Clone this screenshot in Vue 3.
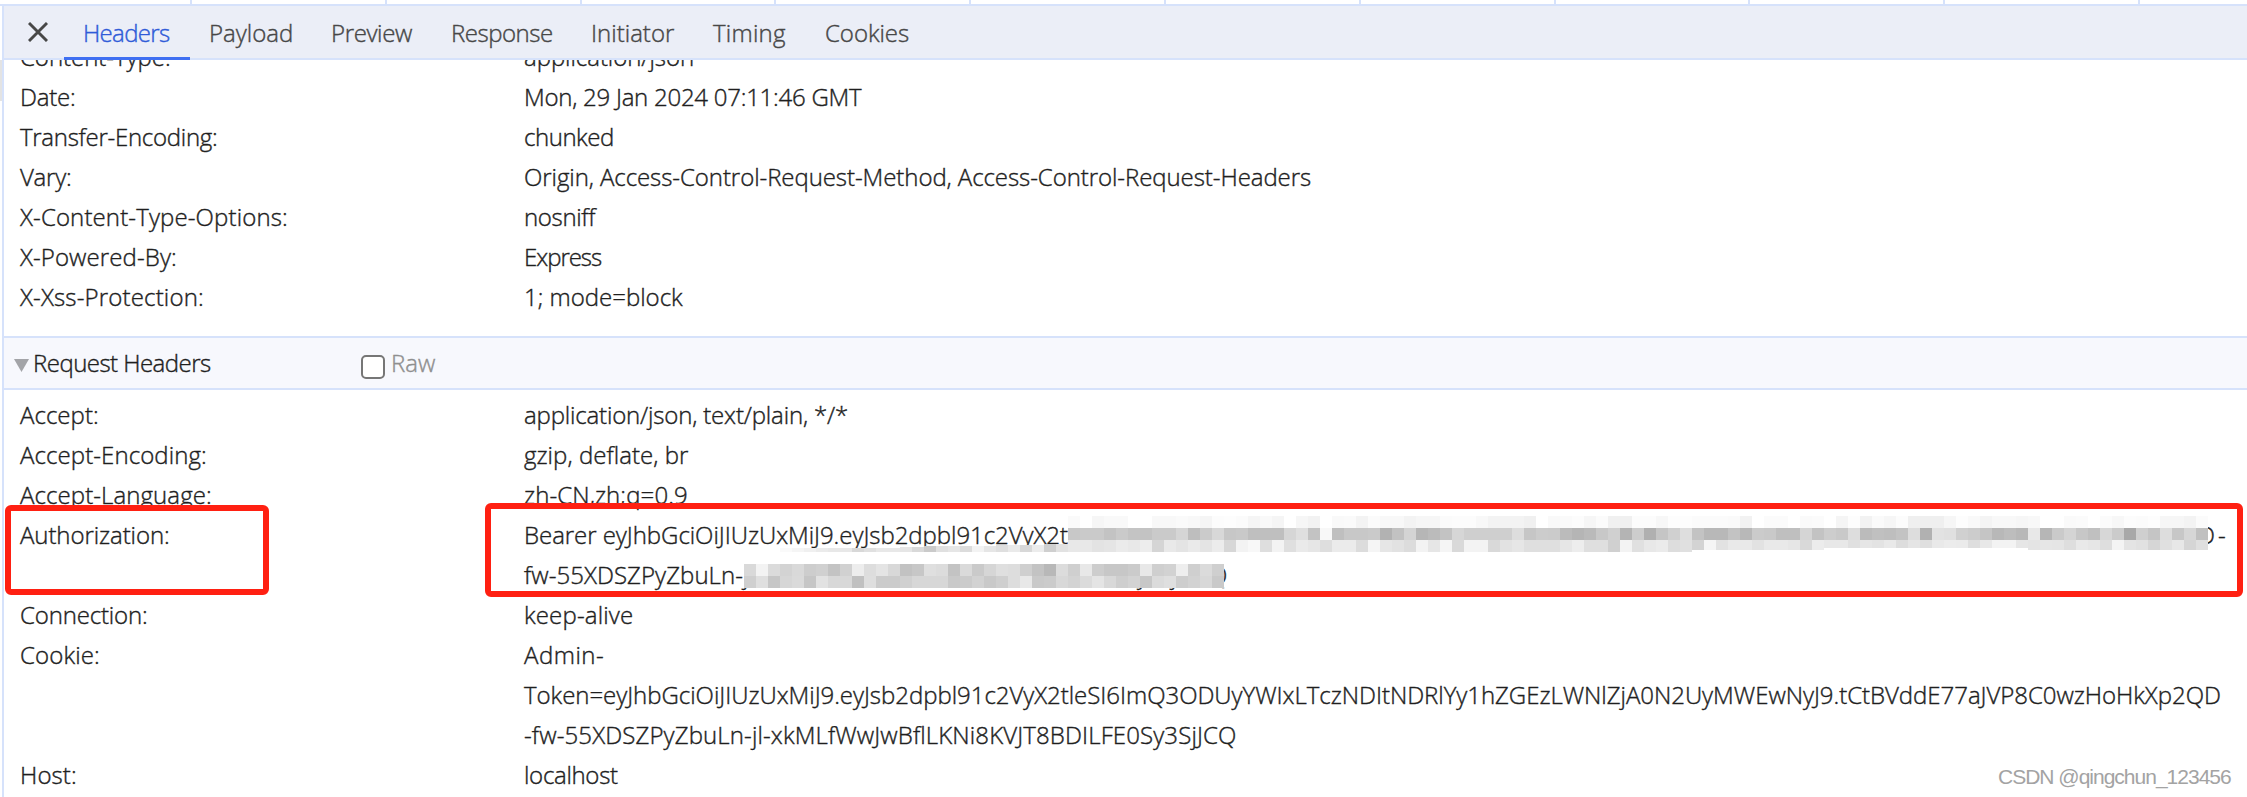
<script setup>
const FAMILY = '"Open Sans", "Noto Sans", sans-serif'
const WATERMARK_FAMILY = '"Liberation Sans", Arial, sans-serif'

const ctx = document.createElement('canvas').getContext('2d')

// Letter spacing that makes a run of text span the given width in pixels.
function fit(text, width, size = 24, family = FAMILY) {
  ctx.font = `${family === FAMILY ? 300 : 400} ${size}px ${family}`
  const right = ctx.measureText(text).actualBoundingBoxRight
  return { letterSpacing: `${((width - right) / (text.length - 1)).toFixed(3)}px` }
}

const tabs = [
  { label: 'Headers', width: 87, active: true },
  { label: 'Payload', width: 83 },
  { label: 'Preview', width: 81 },
  { label: 'Response', width: 101 },
  { label: 'Initiator', width: 83 },
  { label: 'Timing', width: 73 },
  { label: 'Cookies', width: 84 },
]

const response = [
  ['Content-Type:', 149, 'application/json', 169],
  ['Date:', 54, 'Mon, 29 Jan 2024 07:11:46 GMT', 338],
  ['Transfer-Encoding:', 196, 'chunked', 89],
  ['Vary:', 50, 'Origin, Access-Control-Request-Method, Access-Control-Request-Headers', 787],
  ['X-Content-Type-Options:', 266, 'nosniff', 73],
  ['X-Powered-By:', 155, 'Express', 78],
  ['X-Xss-Protection:', 182, '1; mode=block', 159],
]

const requestTop = [
  ['Accept:', 77, 'application/json, text/plain, */*', 323],
  ['Accept-Encoding:', 185, 'gzip, deflate, br', 164],
  ['Accept-Language:', 190, 'zh-CN,zh;q=0.9', 163],
]

const requestBottom = [
  ['Connection:', 126, 'keep-alive', 108],
  ['Cookie:', 78, 'Admin-', 79],
  ['', 0, 'Token=eyJhbGciOiJIUzUxMiJ9.eyJsb2dpbl91c2VyX2tleSI6ImQ3ODUyYWIxLTczNDItNDRlYy1hZGEzLWNlZjA0N2UyMWEwNyJ9.tCtBVddE77aJVP8C0wzHoHkXp2QD', 1696],
  ['', 0, '-fw-55XDSZPyZbuLn-jl-xkMLfWwJwBflLKNi8KVJT8BDILFE0Sy3SjJCQ', 711],
  ['Host:', 55, 'localhost', 94],
]

const CELL = 12
const ORIGIN = 1068

// Pixelated strips: gray levels in hex, one cell each, from a start column.
const strips = [
  { y: 516, start: 0, h: 12, v: 'fa ff f6 f9 f9 ff ff f8 f8 fa f8 f5 fc fd fb f5 f9 f5 ff f6 f2 ff f9 fa f3 fb f8 f8 f3 f6 f6 fb fc fc f8 f3 f3 f3 f0 ff f9 fa fc f6 fb f0 f0 fc fc f7 fd fd fb fb fb fa f2 ff fb fb ff fa fb ff f5 fd f2 fa f6 fc ef ef ef f6 fd f9 f4 f8 f8 f6 f8 ff ff fa fb ff fb f7 fc fb fd f6 f6 f3 fb' },
  { y: 528, start: 0, h: 12, v: 'c8 ca ca c3 ca c4 c3 ca ca d5 be cb d8 c7 c9 bf bf bf d6 df c3 f8 bf c8 c8 ca b2 c2 d4 b6 bb c3 d6 cf cf cf cf dd c6 cc cb bb b5 ba c8 d0 b4 cd b0 c5 d0 de c3 b8 b8 c3 b8 cb c9 bf bf d5 c3 cd c9 dd bb c0 be c3 dd b1 e2 e0 d0 cc c5 b8 bd b8 e8 b6 ca d4 c7 c0 d7 cb a8 cf c5 dd c7 d6 c0' },
  { y: 540, start: 0, h: 12, v: 'e8 e8 e3 e5 eb e8 ed d5 e9 e4 ea e4 ec d7 f3 f8 de f3 df ea e6 de eb eb dc f5 e6 e2 dc f3 e6 f5 d9 f3 f3 d9 e2 e6 df df df e6 ed df df d0 f3 e0 e8 eb dd e0' },
  { y: 540, start: 52, h: 10, v: 'd3 f5 e2 e9 e9 e2 e9 e9 e6 d9 ec' },
  { y: 540, start: 63, h: 8, v: 'e8 e8 e0 e6 e3 e9 dd e5 df e9 ec eb de e8 f3 f3 e6 e4' },
  { y: 540, start: 80, h: 10, v: 'e4 e6 e5 de e9 e6 de f4 e4 e1 d6 e0 e7 d5 df' },
  { y: 548, start: -24, h: 4, v: 'fa f5 f0 eb e8 e8 d8 e0 e8 e8' },
  { y: 547, start: -14, h: 5, v: 'e6 d9' },
  { y: 546, start: -12, h: 6, v: 'ca e0 e6 dc f3 e6' },
  { y: 545, start: -6, h: 7, v: 'df ea d8 ec' },
  { y: 544, start: -2, h: 8, v: 'cf e2' },
  { y: 564, start: -27, h: 12, v: 'd9 f3 db d3 d9 cd d0 c3 d1 ed dd e4 d8 c2 c7 df dc c3 da ca d6 df dd cf c3 b8 dc cf e8 cd c7 c7 cb e8 cf d2 ee cf db cf' },
  { y: 576, start: -27, h: 12, v: 'cf df c6 d6 da c6 e2 d8 d8 c0 de cb cb d0 d7 d7 d7 c9 cb d2 c9 cf dd e8 c9 cb d8 d3 db e4 d8 ce d3 c7 db df cd d2 d8 c9' },
].flatMap((s) =>
  s.v.split(' ').map((g, i) => ({
    x: ORIGIN + (s.start + i) * CELL,
    y: s.y,
    h: s.h,
    fill: `#${g}${g}${g}`,
  })),
)
</script>

<template>
  <div class="page">
    <div class="grid-strip"><i v-for="n in 11" :key="n"></i></div>
    <div class="panel">
      <nav class="tabs">
        <svg class="close" width="20" height="20" viewBox="0 0 20 20">
          <path d="M1 1L19 19M19 1L1 19" />
        </svg>
        <div v-for="t in tabs" :key="t.label" class="tab" :class="{ active: t.active }">
          <span class="tab-label" :style="{ width: t.width + 'px' }"><span :style="fit(t.label, t.width)">{{ t.label }}</span></span>
        </div>
      </nav>

      <section class="rows response">
        <div v-for="r in response" :key="r[0]" class="row">
          <span class="name"><span :style="fit(r[0], r[1])">{{ r[0] }}</span></span>
          <span :style="fit(r[2], r[3])">{{ r[2] }}</span>
        </div>
      </section>

      <header class="section">
        <svg class="arrow" width="15" height="13" viewBox="0 0 15 13"><path d="M0 0H15L7.5 13Z" /></svg>
        <span class="title"><span :style="fit('Request Headers', 178)">Request Headers</span></span>
        <span class="box"></span>
        <span class="raw" :style="fit('Raw', 44)">Raw</span>
      </header>

      <section class="rows request">
        <div v-for="r in requestTop" :key="r[0]" class="row">
          <span class="name"><span :style="fit(r[0], r[1])">{{ r[0] }}</span></span>
          <span :style="fit(r[2], r[3])">{{ r[2] }}</span>
        </div>
        <div class="row">
          <span class="name"><span :style="fit('Authorization:', 148)">Authorization:</span></span>
          <span class="token"><span :style="fit('Bearer eyJhbGciOiJIUzUxMiJ9.eyJsb2dpbl91c2VyX2t', 544)">Bearer eyJhbGciOiJIUzUxMiJ9.eyJsb2dpbl91c2VyX2t</span></span>
          <span :style="fit('D-', 27)">D-</span>
        </div>
        <div class="row">
          <span class="name"></span>
          <span class="token2"><span :style="fit('fw-55XDSZPyZbuLn-j', 223)">fw-55XDSZPyZbuLn-j</span></span>
          <span class="frag-y">y</span>
          <span class="frag-j">j</span>
          <span>Q</span>
        </div>
        <div v-for="r in requestBottom" :key="r[2]" class="row">
          <span class="name"><span v-if="r[0]" :style="fit(r[0], r[1])">{{ r[0] }}</span></span>
          <span :style="fit(r[2], r[3])">{{ r[2] }}</span>
        </div>
      </section>
    </div>

    <svg class="mosaic" width="2247" height="797" shape-rendering="crispEdges">
      <rect v-for="(c, i) in strips" :key="i" :x="c.x" :y="c.y" width="12" :height="c.h" :fill="c.fill" />
    </svg>
    <div class="mark mark-name"></div>
    <div class="mark mark-value"></div>
    <div class="scroll-edge"></div>
    <div class="watermark"><span :style="fit('CSDN @qingchun_123456', 233, 21, WATERMARK_FAMILY)">CSDN @qingchun_123456</span></div>
  </div>
</template>

<style>
body {
  margin: 0;
  background: #fff;
}
</style>

<style scoped>
.page {
  position: relative;
  width: 2247px;
  height: 797px;
  overflow: hidden;
  background: #fff;
  color: #1f1f1f;
  font: 300 24px/40px "Open Sans", "Noto Sans", sans-serif;
  -webkit-text-stroke: 0.4px currentColor;
  white-space: nowrap;
}
.grid-strip {
  display: flex;
  height: 4px;
  padding-left: 190px;
  gap: 192.8px;
  border-bottom: 2px solid #d6e2fb;
}
.grid-strip i {
  flex: none;
  width: 2px;
  background: #d6e2fb;
}
.panel {
  margin-left: 2px;
  height: 791px;
  margin-top: -2px;
  padding-top: 2px;
  border-left: 2px solid #d6e2fb;
  overflow: hidden;
}
.tabs {
  position: relative;
  z-index: 1;
  display: flex;
  height: 52px;
  padding-left: 24px;
  background: #ebeef7;
  border-bottom: 2px solid #d6e2fb;
}
.close {
  margin: 16px 16px 0 0;
}
.close path {
  stroke: #474747;
  stroke-width: 2.9;
  fill: none;
}
.tab {
  height: 51px;
  padding: 0 20px 0 19px;
  color: #474747;
  border-bottom: 3px solid transparent;
}
.tab.active {
  color: #2f5bd8;
  border-color: #3f6ff2;
}
.tab-label {
  display: block;
  line-height: 53px;
}
.rows {
  padding-left: 16px;
}
.row {
  display: flex;
  height: 40px;
}
.name {
  flex: none;
  width: 504px;
}
.response {
  height: 276px;
  overflow: hidden;
}
.response .row:first-child {
  margin-top: -23px;
}
.section {
  display: flex;
  height: 50px;
  padding-left: 10px;
  background: #f7f8fd;
  border-top: 2px solid #d6e2fb;
  border-bottom: 2px solid #d6e2fb;
  line-height: 50px;
}
.arrow {
  margin: 21px 4px 0 0;
  fill: #a3a4a8;
}
.title {
  width: 328px;
}
.box {
  box-sizing: border-box;
  width: 24px;
  height: 24px;
  margin: 17px 6px 0 0;
  border: 2px solid #767676;
  border-radius: 5px;
  background: #fff;
}
.raw {
  color: #8f8f8f;
}
.request {
  padding-top: 5px;
}
.token {
  width: 1674px;
}
.token2 {
  width: 613px;
}
.frag-y {
  width: 34px;
}
.frag-j {
  width: 38px;
}
.mosaic {
  position: absolute;
  left: 0;
  top: 0;
}
.mark {
  position: absolute;
  box-sizing: border-box;
  border: 6px solid #ff2012;
  border-radius: 6px;
}
.mark-name {
  left: 5px;
  top: 505px;
  width: 264px;
  height: 90px;
}
.mark-value {
  left: 485px;
  top: 503px;
  width: 1758px;
  height: 94px;
}
.scroll-edge {
  position: absolute;
  left: 0;
  top: 60px;
  width: 2px;
  height: 41px;
  background: #e3e3e3;
}
.watermark {
  position: absolute;
  left: 1998px;
  top: 762px;
  color: #a3a3a3;
  font: 21px/30px "Liberation Sans", Arial, sans-serif;
  -webkit-text-stroke: 0;
}
</style>
